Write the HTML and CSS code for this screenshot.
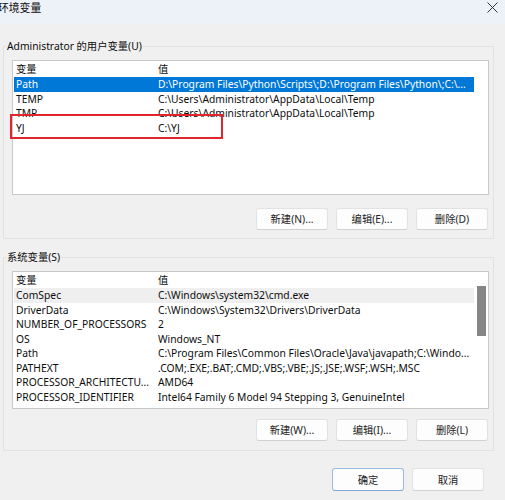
FILE: index.html
```html
<!DOCTYPE html>
<html lang="zh-CN">
<head>
<meta charset="utf-8">
<title>环境变量</title>
<link rel="stylesheet" href="styles.css">
</head>
<body>
<div class="dialog">
  <div class="titlebar">
    <span class="title">环境变量</span>
    <svg class="close" width="11" height="11" viewBox="0 0 11 11"><path d="M0.5 0.5L10.5 10.5M10.5 0.5L0.5 10.5" stroke="#333" stroke-width="1" fill="none"/></svg>
  </div>

  <fieldset class="group">
    <legend>Administrator 的用户变量(U)</legend>
    <div class="list list-user">
      <div class="rows">
        <div class="row head"><span class="name">变量</span><span class="value">值</span></div>
        <div class="row selected"><span class="name">Path</span><span class="value">D:\Program Files\Python\Scripts\;D:\Program Files\Python\;C:\...</span></div>
        <div class="row"><span class="name">TEMP</span><span class="value">C:\Users\Administrator\AppData\Local\Temp</span></div>
        <div class="row"><span class="name">TMP</span><span class="value">C:\Users\Administrator\AppData\Local\Temp</span></div>
        <div class="row"><span class="name">YJ</span><span class="value">C:\YJ</span></div>
      </div>
      <div class="scroll"></div>
      <div class="mark"></div>
    </div>
    <div class="buttons">
      <button class="btn">新建(N)...</button>
      <button class="btn">编辑(E)...</button>
      <button class="btn">删除(D)</button>
    </div>
  </fieldset>

  <fieldset class="group group-sys">
    <legend>系统变量(S)</legend>
    <div class="list list-sys">
      <div class="rows">
        <div class="row head"><span class="name">变量</span><span class="value">值</span></div>
        <div class="row hover"><span class="name">ComSpec</span><span class="value">C:\Windows\system32\cmd.exe</span></div>
        <div class="row"><span class="name">DriverData</span><span class="value">C:\Windows\System32\Drivers\DriverData</span></div>
        <div class="row"><span class="name">NUMBER_OF_PROCESSORS</span><span class="value">2</span></div>
        <div class="row"><span class="name">OS</span><span class="value">Windows_NT</span></div>
        <div class="row"><span class="name">Path</span><span class="value">C:\Program Files\Common Files\Oracle\Java\javapath;C:\Windo...</span></div>
        <div class="row"><span class="name">PATHEXT</span><span class="value">.COM;.EXE;.BAT;.CMD;.VBS;.VBE;.JS;.JSE;.WSF;.WSH;.MSC</span></div>
        <div class="row"><span class="name">PROCESSOR_ARCHITECTU...</span><span class="value">AMD64</span></div>
        <div class="row"><span class="name">PROCESSOR_IDENTIFIER</span><span class="value">Intel64 Family 6 Model 94 Stepping 3, GenuineIntel</span></div>
      </div>
      <div class="scroll"><div class="thumb"></div></div>
    </div>
    <div class="buttons">
      <button class="btn">新建(W)...</button>
      <button class="btn">编辑(I)...</button>
      <button class="btn">删除(L)</button>
    </div>
  </fieldset>

  <div class="footer">
    <button class="btn btn-default">确定</button>
    <button class="btn">取消</button>
  </div>
</div>
</body>
</html>
```

FILE: styles.css
```css
* { box-sizing: border-box; }

html, body {
  margin: 0;
  padding: 0;
}

body {
  width: 505px;
  height: 500px;
  overflow: hidden;
  background: #f0f0f0;
  font-family: "Noto Sans", "Noto Sans CJK SC", sans-serif;
  font-size: 10.3px;
  color: #0d0d0d;
}

.dialog {
  display: flex;
  flex-direction: column;
  height: 500px;
}

.titlebar {
  height: 24px;
  background: linear-gradient(#edf2f9, #eef2f7);
  display: flex;
  justify-content: space-between;
  align-items: flex-start;
  padding: 0 7px 0 0;
}

.title {
  line-height: 15px;
  margin-left: -2px;
  font-size: 10.8px;
}

.close {
  margin-top: 2px;
}

.group {
  margin: 14px 11px 0 3px;
  padding: 0 4px 8px 8px;
  border: 1px solid #e2e2e2;
  min-width: 0;
}

.group-sys {
  margin-top: 10px;
  padding-bottom: 9px;
}

.group legend {
  margin-left: -6px;
  padding: 0 1px;
  line-height: 16px;
  height: 16px;
}

.list {
  position: relative;
  margin-top: 6px;
  background: #fff;
  border: 1px solid #c9c9c9;
  display: flex;
  padding: 0 0 0 1px;
}

.list-user { height: 135px; }
.list-sys { height: 138px; }

.rows {
  width: 460px;
  display: flex;
  flex-direction: column;
}

.row {
  display: flex;
  height: 14.5px;
  line-height: 14.5px;
  white-space: nowrap;
}

.row.head {
  height: 16px;
  line-height: 16px;
}

.name {
  width: 144px;
  padding-left: 2px;
  overflow: hidden;
}

.value {
  flex: 1;
  overflow: hidden;
}

.row.selected {
  background: #0078d7;
  color: #fff;
}

.row.hover {
  background: #efefef;
}

.scroll {
  flex: 1;
  padding: 14px 2px 0 3px;
}

.thumb {
  width: 9px;
  height: 50px;
  background: #868686;
}

.mark {
  position: absolute;
  left: -3px;
  top: 53px;
  width: 213px;
  height: 25px;
  border: 2px solid #e0262c;
}

.buttons {
  display: flex;
  justify-content: flex-end;
  gap: 8px;
  margin-top: 13px;
  padding-right: 1px;
}

.group-sys .buttons {
  margin-top: 10px;
}

.btn {
  width: 72px;
  height: 22px;
  font-family: "Noto Sans", "Noto Sans CJK SC", sans-serif;
  font-size: 10.3px;
  color: #222;
  background: #fdfdfd;
  border: 1px solid #e2e2e2;
  border-bottom-color: #d0d0d0;
  border-radius: 3px;
  padding: 0;
  line-height: 20px;
}

.footer {
  display: flex;
  justify-content: flex-end;
  gap: 8px;
  margin-top: 17px;
  padding-right: 21px;
}

.footer .btn {
  height: 23px;
  width: 72px;
}

.btn-default {
  border-color: #9bbbe0;
  border-bottom-color: #7fa6d6;
}
```
